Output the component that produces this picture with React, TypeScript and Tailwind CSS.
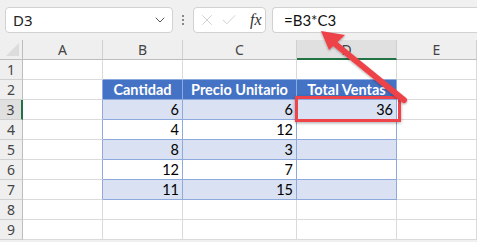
import { ChevronDown, X, Check } from "lucide-react"

/* ===== Sheet data ===== */
const cols = ["A", "B", "C", "D", "E"]

const rows: (string | number)[][] = [
  ["", "", "", "", ""],
  ["", "Cantidad", "Precio Unitario", "Total Ventas", ""],
  ["", 6, 6, 36, ""],
  ["", 4, 12, "", ""],
  ["", 8, 3, "", ""],
  ["", 12, 7, "", ""],
  ["", 11, 15, "", ""],
  ["", "", "", "", ""],
  ["", "", "", "", ""],
]

const cellFont = { fontFamily: "Lato, 'Open Sans', sans-serif" }
const uiFont = { fontFamily: "'Noto Sans', 'Open Sans', sans-serif" }

const inTable = (r: number, c: number) => r >= 1 && r <= 6 && c >= 1 && c <= 3

function cellClass(r: number, c: number) {
  const table = inTable(r, c)
  // right border blue when this cell or its right neighbour is in the table
  const rightBlue = table || inTable(r, c + 1)
  const bottomBlue = table || inTable(r + 1, c)
  const fill =
    r === 1 && table
      ? "bg-[#4472c4] text-white font-bold text-center"
      : table && r % 2 === 0
        ? "bg-[#d9e1f2] text-black text-right"
        : "bg-white text-black text-right"
  return [
    "h-5 border-r border-b px-[3px] text-[14.5px] leading-[20px] whitespace-nowrap overflow-visible",
    rightBlue ? "border-r-[#8ea9db]" : "border-r-[#dadada]",
    bottomBlue ? "border-b-[#8ea9db]" : "border-b-[#dadada]",
    fill,
  ].join(" ")
}

export default function App() {
  return (
    <div className="relative w-[477px] h-[242px] overflow-hidden bg-[#f0f0f0]" style={uiFont}>
      {/* Formula bar */}
      <div className="flex items-center h-10 pl-[5px] gap-[6px]">
        <div className="flex items-center justify-between w-[168px] h-[26px] bg-white border border-[#d2d2d2] rounded-[4px] pl-[7px] pr-[4px]">
          <span className="text-[15px] text-[#222]">D3</span>
          <ChevronDown className="w-4 h-4 text-[#555]" strokeWidth={1.5} />
        </div>
        <div className="flex flex-col gap-[2px] px-[3px]">
          <div className="w-[2px] h-[2px] bg-[#888]" />
          <div className="w-[2px] h-[2px] bg-[#888]" />
          <div className="w-[2px] h-[2px] bg-[#888]" />
        </div>
        <div className="flex items-center w-[73px] h-[26px] bg-white border border-[#d2d2d2] rounded-[4px] pl-[4px] gap-[4px]">
          <X className="w-[18px] h-[18px] text-[#c8c8c8]" strokeWidth={1.1} />
          <Check className="w-[18px] h-[18px] text-[#c8c8c8]" strokeWidth={1.1} />
          <span
            className="ml-[8px] text-[16px] italic text-[#333]"
            style={{ fontFamily: "'Liberation Serif', serif" }}
          >
            fx
          </span>
        </div>
        <div className="flex items-center flex-1 h-[26px] bg-white border border-[#d2d2d2] rounded-l-[4px] border-r-0 pl-[11px]">
          <span className="text-[15px] text-[#111]" style={cellFont}>=B3*C3</span>
        </div>
      </div>

      {/* Grid */}
      <div className="grid grid-cols-[23px_80px_80px_114px_100px_80px] bg-white">
        {/* Header row */}
        <div className="h-5 bg-[#efefef] border-r border-b border-[#bdbdbd] relative">
          <div className="absolute right-[3px] bottom-[3px] w-0 h-0 border-l-[13px] border-l-transparent border-b-[13px] border-b-[#dcdcdc]" />
        </div>
        {cols.map((c) => (
          <div
            key={c}
            className={
              c === "D"
                ? "h-5 bg-[#e0e0e0] border-r border-r-[#d0d0d0] border-b-2 border-b-[#217346] text-center text-[14px] leading-[19px] text-[#444]"
                : "h-5 bg-[#efefef] border-r border-r-[#d0d0d0] border-b border-b-[#bdbdbd] text-center text-[14px] leading-[19px] text-[#444]"
            }
          >
            {c}
          </div>
        ))}

        {/* Body rows */}
        {rows.map((row, r) => (
          <div key={r} className="contents">
            <div
              className={
                r === 2
                  ? "h-5 bg-[#e0e0e0] border-r-2 border-r-[#217346] border-b border-b-[#d0d0d0] text-center text-[14px] leading-[19px] text-[#444]"
                  : "h-5 bg-[#efefef] border-r border-r-[#bdbdbd] border-b border-b-[#d0d0d0] text-center text-[14px] leading-[19px] text-[#444]"
              }
            >
              {r + 1}
            </div>
            {row.map((v, c) => (
              <div key={c} className={cellClass(r, c)} style={cellFont}>
                {v}
              </div>
            ))}
          </div>
        ))}
      </div>

      {/* Red highlight box and arrow */}
      <div className="absolute left-[295px] top-[96px] w-[106px] h-[26px] border-[3px] border-[#ee4349] shadow-[0_1px_3px_rgba(0,0,0,0.35)]" />
      <svg className="absolute inset-0 pointer-events-none" width="477" height="242">
        <defs>
          <filter id="sh" x="-20%" y="-20%" width="140%" height="140%">
            <feDropShadow dx="0" dy="1" stdDeviation="1.2" floodColor="#000" floodOpacity="0.35" />
          </filter>
        </defs>
        <g filter="url(#sh)">
          <line x1="404" y1="100" x2="334" y2="43" stroke="#ee4349" strokeWidth="6" strokeLinecap="round" />
          <polygon points="321,31 345,35 329,50" fill="#ee4349" />
        </g>
      </svg>
    </div>
  )
}
